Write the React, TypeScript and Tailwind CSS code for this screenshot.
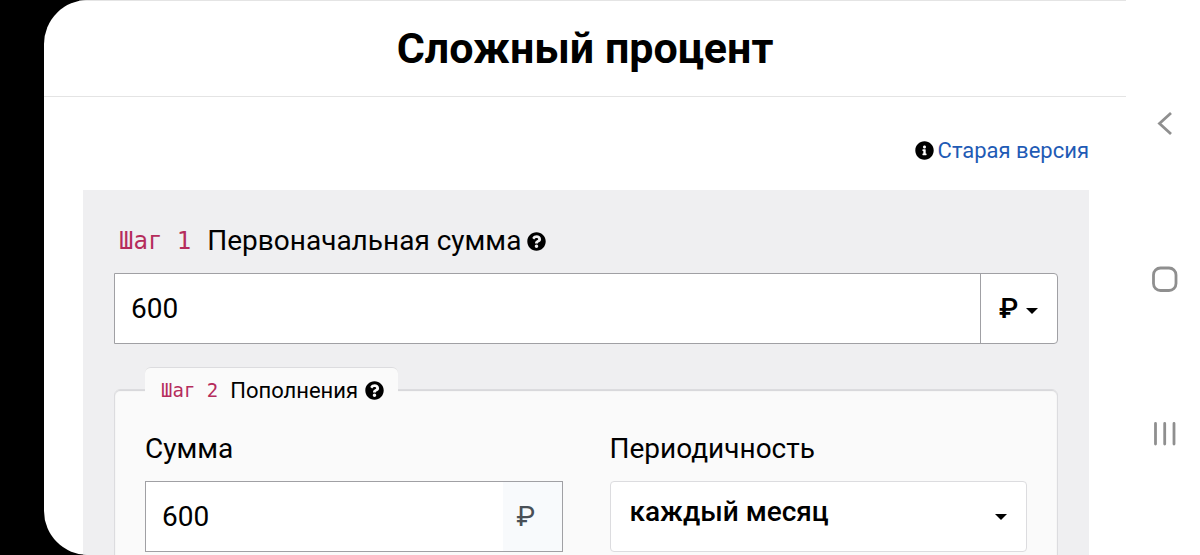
import { useState } from "react";
import { FaInfoCircle, FaQuestionCircle } from "react-icons/fa";

function Caret() {
  return (
    <svg viewBox="0 0 12 6" className="h-[6px] w-3" aria-hidden="true">
      <path d="M0 0h12L6 6z" fill="#000" />
    </svg>
  );
}

function SystemBar() {
  return (
    <nav
      aria-label="Навигация"
      className="flex w-[74px] shrink-0 flex-col items-center justify-center gap-[127px] pt-[3px] pl-[3px] text-[#8f8f8f]"
    >
      <button type="button" aria-label="Назад">
        <svg viewBox="0 0 28 28" className="block size-7" fill="none" stroke="currentColor">
          <path d="M20 3 8.500 13.500 20 24" strokeWidth="2.800" />
        </svg>
      </button>
      <button type="button" aria-label="Домой">
        <svg viewBox="0 0 28 28" className="block size-7" fill="none" stroke="currentColor">
          <rect x="2.500" y="3" width="22.500" height="22.500" rx="7" strokeWidth="2.800" />
        </svg>
      </button>
      <button type="button" aria-label="Недавние">
        <svg viewBox="0 0 28 28" className="block size-7" fill="none" stroke="currentColor">
          <path
            d="M4.500 3.500v20.500M13.700 3.500v20.500M23 3.500v20.500"
            strokeWidth="2.800"
            strokeLinecap="round"
          />
        </svg>
      </button>
    </nav>
  );
}

export default function App() {
  const [initial, setInitial] = useState("600");
  const [deposit, setDeposit] = useState("600");

  return (
    <div className="h-screen bg-black pl-11 font-[Roboto,sans-serif] text-black">
      <div className="flex h-full overflow-hidden rounded-l-[44px] bg-white">
        <main className="min-w-0 flex-1">
          <header className="border-y border-[#e4e4e4] py-6">
            <h1 className="text-center text-[43px] leading-[47px] font-bold">Сложный процент</h1>
          </header>

          <div className="pr-[37px] pl-[39px]">
            <div className="flex items-center justify-end gap-1 pt-10 pb-[26px] text-[22px] leading-[27px]">
              <FaInfoCircle className="size-[19px]" />
              <a href="#old" className="text-[#1f5bb5]">
                Старая версия
              </a>
            </div>

            <form className="bg-[#efeff1] px-[31px] pt-[33px] pb-8">
              <div className="flex items-center gap-[6px] pl-[5px] text-[28px] leading-9">
                <label htmlFor="initial" className="flex items-center gap-4">
                  <span className="font-['DejaVu_Sans_Mono',monospace] text-2xl leading-9 text-[#b52c5c]">
                    Шаг 1
                  </span>
                  Первоначальная сумма
                </label>
                <FaQuestionCircle className="size-[19px]" />
              </div>

              <div className="mt-[14px] flex h-[71px] rounded-r-[4px] border border-[#a0a0a4] bg-white">
                <input
                  id="initial"
                  inputMode="numeric"
                  value={initial}
                  onChange={(e) => setInitial(e.target.value)}
                  className="min-w-0 flex-1 bg-transparent px-4 text-[28px] outline-none"
                />
                <div className="relative w-[77px] border-l border-[#a0a0a4]">
                  <select
                    aria-label="Валюта"
                    className="h-full w-full appearance-none bg-transparent pl-[18px] text-[28px] font-medium outline-none"
                  >
                    <option>₽</option>
                  </select>
                  <span className="pointer-events-none absolute inset-y-0 right-[19px] flex items-center pt-1">
                    <Caret />
                  </span>
                </div>
              </div>

              <fieldset className="mt-[23px] rounded-[6px] border border-[#dcdcdf] bg-[#fafafa] px-[30px] pb-8 shadow-[inset_0_1px_1px_#d4d4d7]">
                <legend className="rounded-[6px] border-t border-[#dcdcdf] bg-[#fafafa] pr-[14px] pl-4">
                  <span className="flex h-11 items-center gap-[7px] text-[22px]">
                    <span className="flex items-center gap-3">
                      <span className="font-['DejaVu_Sans_Mono',monospace] text-[19px] text-[#b52c5c]">
                        Шаг 2
                      </span>
                      Пополнения
                    </span>
                    <FaQuestionCircle className="size-[19px]" />
                  </span>
                </legend>

                <div className="grid grid-cols-2 gap-x-[47px] pt-[19px]">
                  <div>
                    <label htmlFor="deposit" className="block text-[28px] leading-9">
                      Сумма
                    </label>
                    <div className="mt-[14px] flex h-[71px] border border-[#a0a0a4] bg-white">
                      <input
                        id="deposit"
                        inputMode="numeric"
                        value={deposit}
                        onChange={(e) => setDeposit(e.target.value)}
                        className="min-w-0 flex-1 bg-transparent px-4 text-[28px] outline-none"
                      />
                      <span className="flex w-[59px] items-center bg-[#f8fafc] pl-[14px] text-[28px] text-[#495057]">
                        ₽
                      </span>
                    </div>
                  </div>

                  <div>
                    <label htmlFor="period" className="block text-[28px] leading-9">
                      Периодичность
                    </label>
                    <div className="relative mt-[14px] h-[71px] rounded-[4px] border border-[#dcdcdf] bg-white">
                      <select
                        id="period"
                        className="h-full w-full appearance-none bg-transparent pr-12 pb-[10px] pl-[19px] text-[28px] font-medium outline-none"
                      >
                        <option>каждый месяц</option>
                      </select>
                      <span className="pointer-events-none absolute inset-y-0 right-[19px] flex items-center">
                        <Caret />
                      </span>
                    </div>
                  </div>
                </div>
              </fieldset>
            </form>
          </div>
        </main>
        <SystemBar />
      </div>
    </div>
  );
}
